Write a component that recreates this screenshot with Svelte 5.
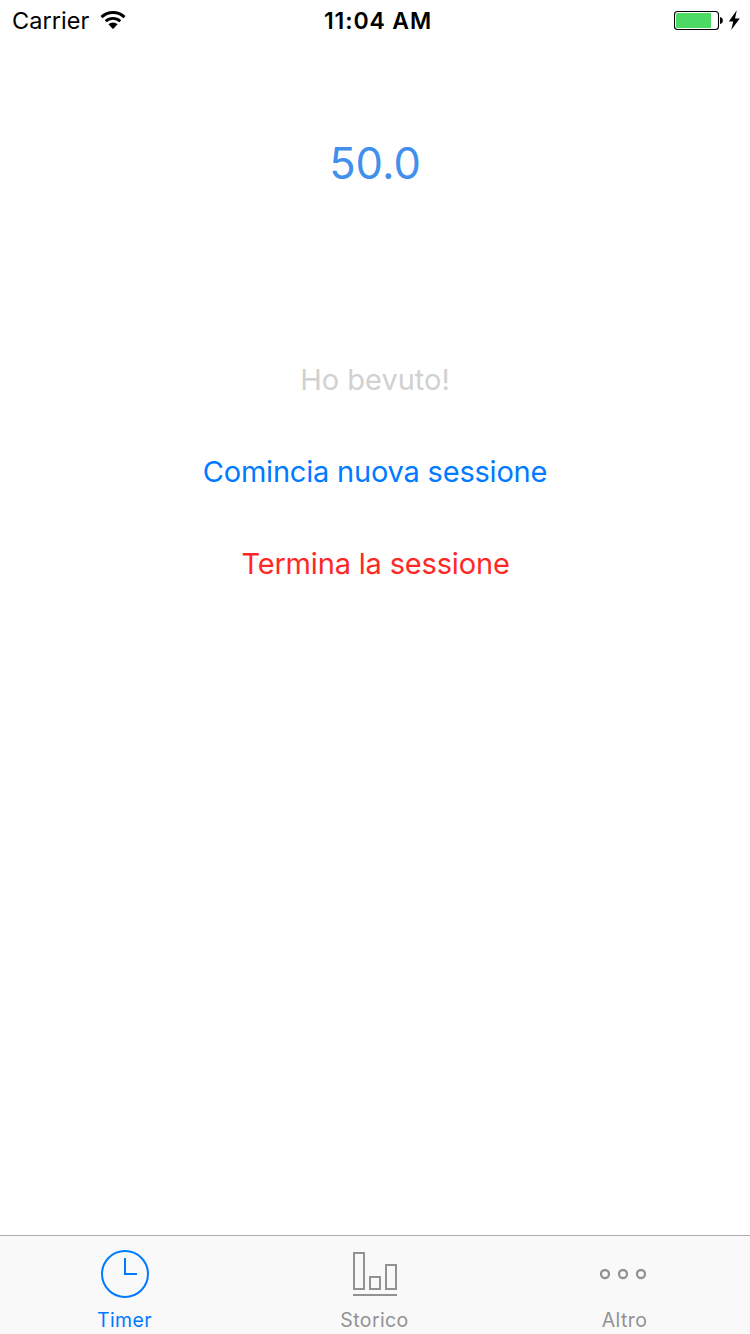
<script>
  let selected = $state('timer');
  const tabs = [
    { id: 'timer', label: 'Timer' },
    { id: 'history', label: 'Storico' },
    { id: 'more', label: 'Altro' }
  ];
</script>

<div class="screen">
  <header class="status">
    <div class="carrier">
      <span class="name">Carrier</span>
      <svg class="wifi" width="26" height="18" viewBox="0 0 26 18">
        <path d="M1.5 6.2 A16.5 16.5 0 0 1 24.5 6.2" fill="none" stroke="#000" stroke-width="3" />
        <path d="M5.7 10.3 A10.6 10.6 0 0 1 20.3 10.3" fill="none" stroke="#000" stroke-width="2.8" />
        <path d="M8.4 13.3 A6.6 6.6 0 0 1 17.6 13.3 L13.6 17.5 Q13 18 12.4 17.5 Z" fill="#000" />
      </svg>
    </div>
    <span class="clock">11:04 AM</span>
    <svg class="battery" width="68" height="22" viewBox="0 0 68 22">
      <rect x="0.5" y="2.5" width="44" height="18" rx="3" fill="#fff" stroke="#000" stroke-width="1.1" />
      <path d="M2 5.5 Q2 4 3.5 4 H37 V19 H3.5 Q2 19 2 17.5 Z" fill="#4cd964" />
      <path d="M46 8 C49.8 8.4 49.8 14.6 46 15 Z" fill="#000" />
      <path d="M62.8 1.2 L54.8 12.6 H59.2 L57.2 21 L65.8 9.4 H61 Z" fill="#000" />
    </svg>
  </header>

  <main>
    <div class="value">50.0</div>
    <button class="drank" disabled>Ho bevuto!</button>
    <button class="start">Comincia nuova sessione</button>
    <button class="stop">Termina la sessione</button>
  </main>

  <nav>
    {#each tabs as tab}
      <button class="tab {tab.id}" class:active={selected === tab.id} onclick={() => (selected = tab.id)}>
        <svg width="50" height="50" viewBox="0 0 50 50" fill="none" stroke="currentColor" stroke-width="2">
          {#if tab.id === 'timer'}
            <circle cx="25" cy="25" r="23" />
            <path d="M25 9 V25 H37" />
          {:else if tab.id === 'history'}
            <path d="M4 4 H14 V40 H4 Z M20 28 H30 V40 H20 Z M36 16 H46 V40 H36 Z M3 46 H47" />
          {:else}
            <g stroke-width="2.3">
              <circle cx="5" cy="25" r="4" />
              <circle cx="23" cy="25" r="4" />
              <circle cx="41" cy="25" r="4" />
            </g>
          {/if}
        </svg>
        <span>{tab.label}</span>
      </button>
    {/each}
  </nav>
</div>

<style>
  :global(body) { margin: 0; background: #fff; }
  .screen {
    height: 1334px;
    display: flex;
    flex-direction: column;
    background: #fff;
    font-family: Inter, "Liberation Sans", sans-serif;
  }
  button {
    display: block;
    margin: 0;
    padding: 0;
    border: 0;
    background: none;
    font-family: inherit;
    white-space: nowrap;
  }
  .status {
    height: 40px;
    display: grid;
    grid-template-columns: 1fr auto 1fr;
    grid-template-rows: 40px;
    align-items: center;
    box-sizing: border-box;
    padding: 0 8px 0 12px;
    color: #000;
  }
  .carrier { display: flex; align-items: center; gap: 10.5px; }
  .name { font-size: 23.5px; line-height: 38px; letter-spacing: 0.05px; padding-top: 2px; }
  .wifi { display: block; }
  .clock { font-size: 23px; font-weight: 600; line-height: 38px; letter-spacing: 0.9px; padding: 2px 0 0 2px; }
  .battery { display: block; justify-self: end; }
  main {
    flex: 1;
    display: flex;
    flex-direction: column;
    align-items: center;
  }
  .value {
    margin-top: 96px;
    font-size: 43.5px;
    line-height: 54px;
    color: #4190ee;
  }
  main button { font-size: 29px; line-height: 36px; }
  .drank { margin-top: 172px; color: #d1d1d1; }
  .start { margin-top: 56px; color: #007aff; letter-spacing: -0.2px; }
  .stop { margin-top: 56px; padding-left: 1px; color: #ff2826; letter-spacing: -0.17px; }
  nav {
    height: 98px;
    display: grid;
    grid-template-columns: repeat(3, 1fr);
    border-top: 1px solid #adadad;
    background: #f9f9f9;
  }
  .tab {
    display: flex;
    flex-direction: column;
    align-items: center;
    padding-top: 13px;
    color: #929292;
    font-size: 19.5px;
    line-height: 24px;
  }
  .tab span { margin-top: 9px; padding-right: 1px; letter-spacing: 0.4px; }
  .active { color: #007aff; }
</style>
